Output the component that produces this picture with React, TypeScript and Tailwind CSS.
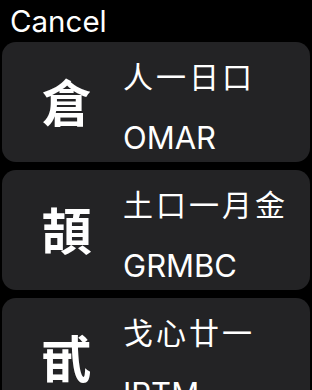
const rows = [
  { char: '倉', radicals: '人一日口', code: 'OMAR' },
  { char: '頡', radicals: '土口一月金', code: 'GRMBC' },
  { char: '甙', radicals: '戈心廿一', code: 'IPTM' },
]

const font = { fontFamily: 'Inter, "Noto Sans CJK TC", sans-serif' }

export default function App() {
  return (
    <div className="w-[312px] h-[390px] bg-black text-white overflow-hidden" style={font}>
      <div className="h-[42px] pl-[10px] pt-[4px] text-[29.5px] leading-[34px]">Cancel</div>
      <div className="flex flex-col gap-2 px-[2px]">
        {rows.map(r => (
          <div key={r.code} className="flex h-[120px] shrink-0 rounded-[14px] bg-[#232325]">
            <div className="w-[121px] flex items-center justify-center pl-[8px] pt-[4px] text-[50px] font-bold leading-none">
              {r.char}
            </div>
            <div className="flex flex-col pt-[20px]">
              <div className="text-[30px] leading-[30px] tracking-[3px]">{r.radicals}</div>
              <div className="mt-[29px] text-[31px] leading-[34px]">{r.code}</div>
            </div>
          </div>
        ))}
      </div>
    </div>
  )
}
